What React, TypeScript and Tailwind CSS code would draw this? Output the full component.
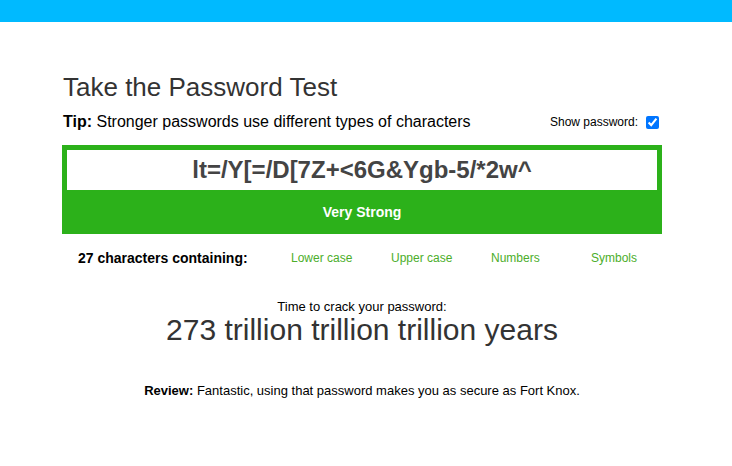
import React from "react";

const CHAR_TYPES = ["Lower case", "Upper case", "Numbers", "Symbols"];

export default function App() {
	return (
		<div className="min-h-[466px] bg-white font-['Liberation_Sans',Arial,sans-serif] text-[#333]">
			<div className="h-[22px] bg-[#00baff]" />

			<div className="ml-[62px] w-[600px] pt-[50px]">
				<h1 className="ml-px text-[26px] leading-[30px]">Take the Password Test</h1>

				<div className="mt-[10px] flex items-center justify-between">
					<p className="ml-px text-[16px] leading-[20px] text-black">
						<b>Tip:</b> Stronger passwords use different types of characters
					</p>
					<label className="mr-[3px] flex items-center gap-[8px] text-[12px] text-black">
						Show password:
						<input type="checkbox" defaultChecked className="h-[13px] w-[13px] accent-[#0075ff]" />
					</label>
				</div>

				<div className="mt-[13px] bg-[#2cb11a] p-[5px] pb-0">
					<div className="flex h-[40px] items-center justify-center bg-white text-[24px] font-bold text-[#444]">
						lt=/Y[=/D[7Z+&lt;6G&amp;Ygb-5/*2w^
					</div>
					<div className="flex h-[44px] items-center justify-center text-[14px] font-bold text-white">
						Very Strong
					</div>
				</div>

				<div className="mt-[15px] flex items-center text-[12px] leading-[18px]">
					<div className="w-[229px] shrink-0 pl-[16px] text-[14px] font-bold text-black">27 characters containing:</div>
					{CHAR_TYPES.map((t) => (
						<div key={t} className="w-[100px] shrink-0 text-[#4cae2a]">
							{t}
						</div>
					))}
				</div>

				<div className="mt-[32px] flex flex-col items-center">
					<div className="text-[13px] leading-[15px] text-black">Time to crack your password:</div>
					<div className="-mt-[2px] text-[30px] leading-[35px]">273 trillion trillion trillion years</div>
				</div>

				<p className="mt-[34px] text-center text-[13px] text-black">
					<b>Review:</b> Fantastic, using that password makes you as secure as Fort Knox.
				</p>
			</div>
		</div>
	);
}
